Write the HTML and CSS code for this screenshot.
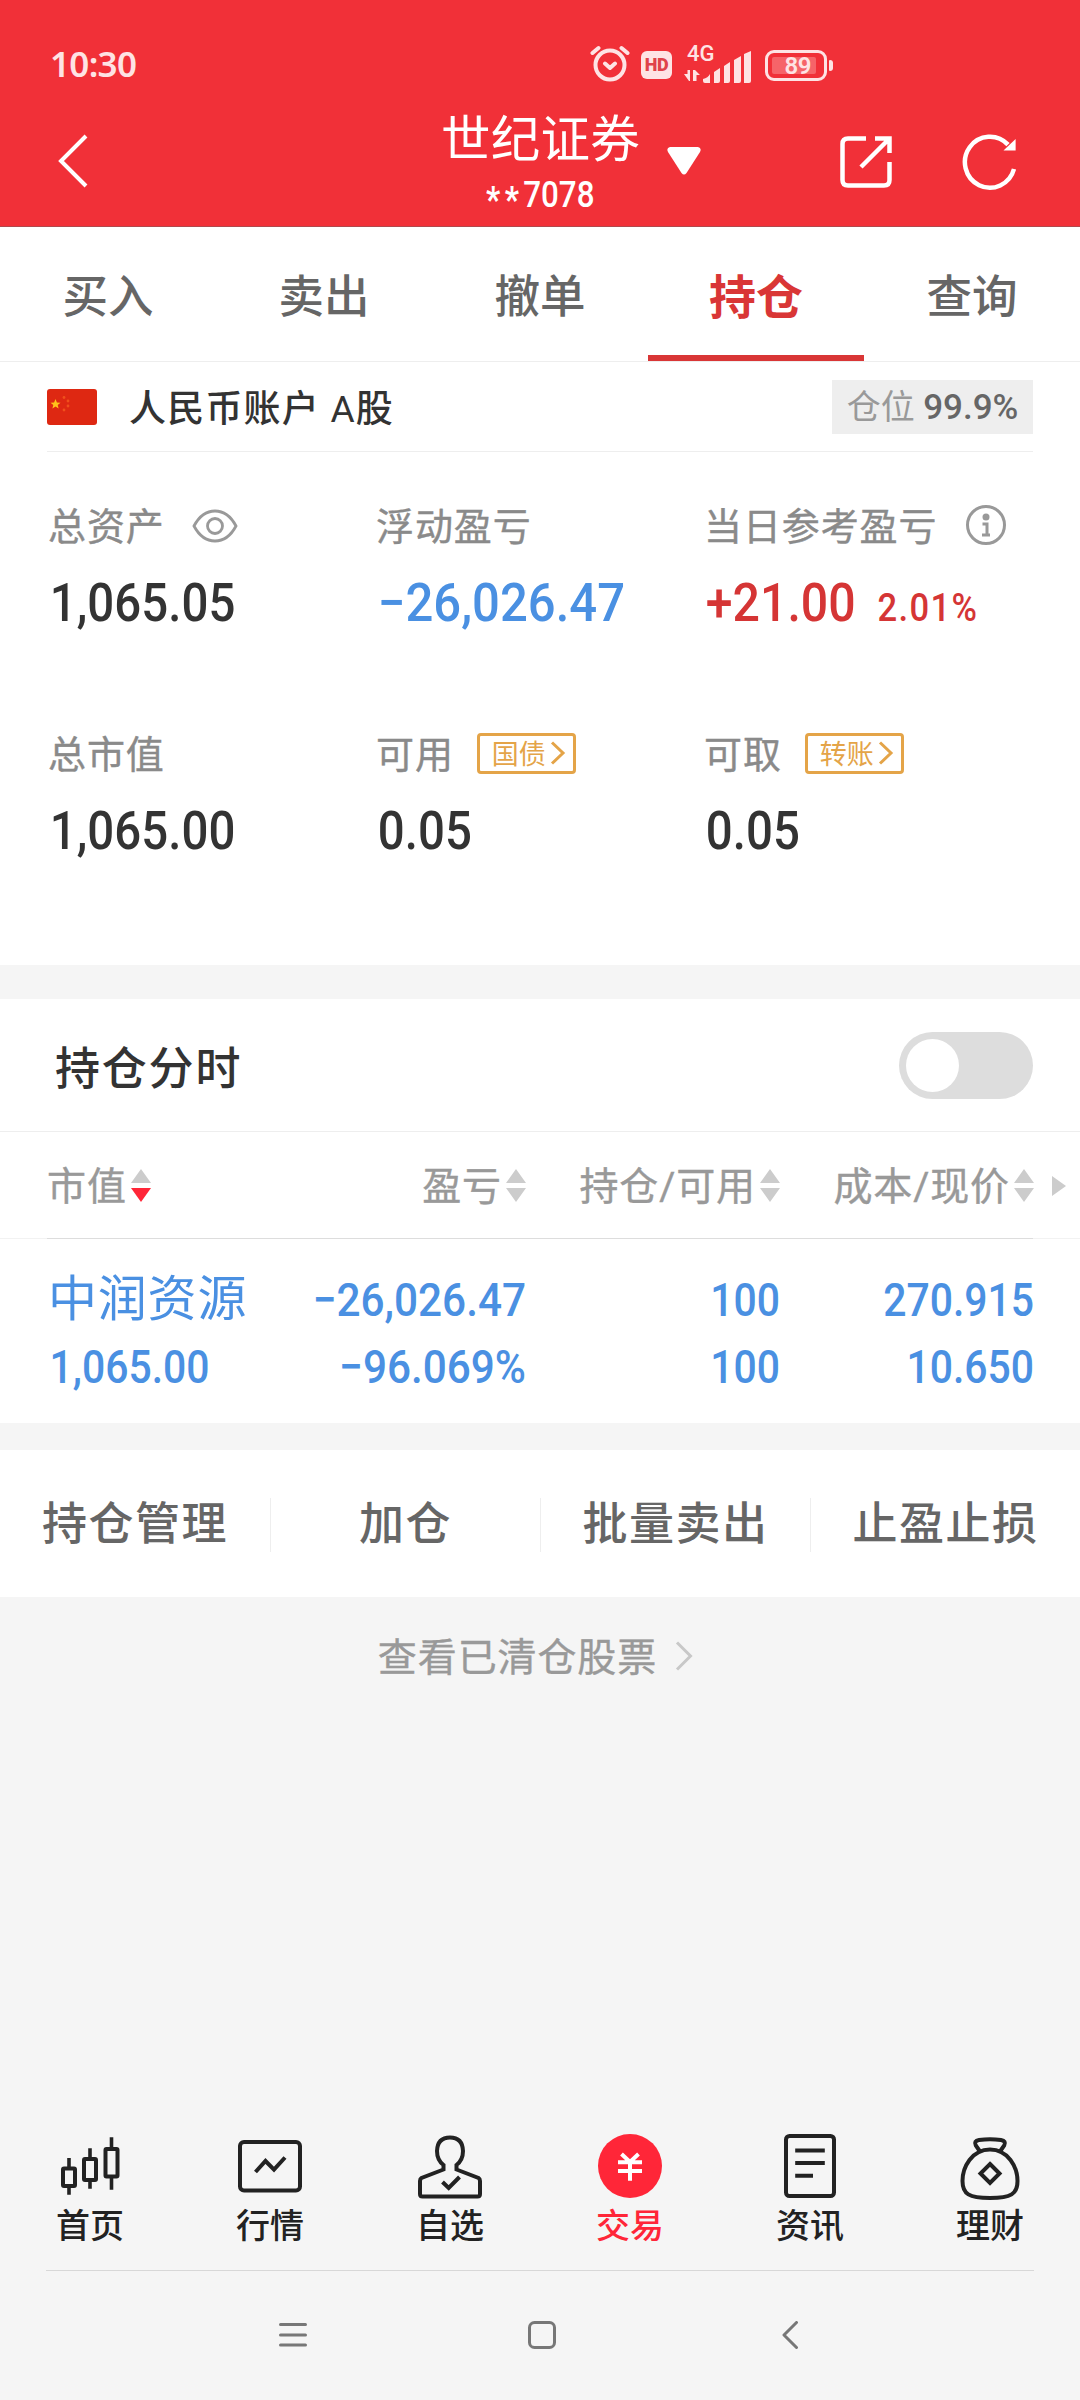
FILE: index.html
```html
<!DOCTYPE html>
<html lang="zh-CN">
<head>
<meta charset="utf-8">
<title>持仓</title>
<link rel="stylesheet" href="styles.css">
</head>
<body>
<div class="app">
  <header class="header">
    <div class="status">
      <span class="time">10:30</span>
      <div class="status-icons">
        <svg class="alarm" width="40" height="40" viewBox="0 0 40 40" fill="none" stroke="#fee3e4" stroke-width="4" stroke-linecap="round" stroke-linejoin="round"><circle cx="20" cy="22" r="14.5"/><path d="M15 20.500l5 4.500 5-4.500M2.500 10L8.500 5M31.500 5l6 5"/></svg>
        <span class="hd">HD</span>
        <div class="signal">
          <span class="net">4G</span>
          <svg width="68" height="40" viewBox="0 0 68 40" fill="#fee3e4"><path d="M0 31h3.500V27h2.500V38H5zM9 27h2l5 5h-3.500v6H9z"/><path d="M19 36q5-1 7-5v9h-5q-2 0-2-2zM30 29l6-4v13q0 2-2 2h-4zM40 23l6-4v19q0 2-2 2h-4zM50 17l7-4v25q0 2-2 2h-5zM60 11l7-3v30q0 2-2 2h-5z"/></svg>
        </div>
        <div class="battery"><span class="level">89</span></div>
        <span class="battery-tip"></span>
      </div>
    </div>
    <div class="titlebar">
      <svg class="back" width="32" height="56" viewBox="0 0 32 56" fill="none" stroke="#fff" stroke-width="4"><path d="M29 3L4 28l25 25"/></svg>
      <div class="title">
        <span class="broker">世纪证券</span>
        <span class="account-no"><i>**</i>7078</span>
      </div>
      <div class="actions">
        <svg class="caret" width="34" height="28" viewBox="0 0 34 28" fill="#fff"><path d="M3 0h28q4 1 2 5L19.500 26q-2.500 3-5 0L1 5Q-1 1 3 0z"/></svg>
        <svg class="share" width="54" height="54" viewBox="0 0 54 54" fill="none" stroke="#fff" stroke-width="4.500"><path d="M27 3.500H9q-5.500 0-5.500 5.500v36q0 5.500 5.500 5.500h36q5.500 0 5.500-5.500V27"/><path d="M36 3.500h14.500V18M50 4L22 32"/></svg>
        <svg class="refresh" width="56" height="58" viewBox="0 0 56 58" fill="none" stroke="#fff" stroke-width="4.500"><path d="M46 11.600A25 25.500 0 1 0 52 36"/><path d="M53.600 6v11.500H41.500z" fill="#fff" stroke="none"/></svg>
      </div>
    </div>
  </header>

  <nav class="tabs">
    <span>买入</span><span>卖出</span><span>撤单</span><span class="active">持仓</span><span>查询</span>
  </nav>

  <section class="account">
    <div class="account-row">
      <svg class="flag" width="50" height="36" viewBox="0 0 50 36"><rect width="50" height="36" rx="3" fill="#de2812"/><path d="M8.500 10l1.400 3.500 3.600.2-2.800 2.300.9 3.600-3.100-2-3.100 2 .9-3.600-2.800-2.300 3.600-.2z" fill="#ffc21a"/><g fill="#f0501c"><circle cx="17" cy="8.500" r="1.400"/><circle cx="21" cy="12" r="1.400"/><circle cx="21" cy="17" r="1.400"/><circle cx="17" cy="21" r="1.400"/></g></svg>
      <span class="account-name">人民币账户 A股</span>
      <span class="position">仓位 <b>99.9%</b></span>
    </div>
    <div class="stats">
      <div class="stat">
        <div class="label">总资产<svg class="eye" width="46" height="34" viewBox="0 0 46 34" fill="none" stroke="#999" stroke-width="2.800"><path d="M2 17Q10 2 23 2t21 15Q36 32 23 32T2 17z"/><circle cx="23" cy="17" r="7.500"/></svg></div>
        <div class="value">1,065.05</div>
      </div>
      <div class="stat">
        <div class="label">浮动盈亏</div>
        <div class="value blue">−26,026.47</div>
      </div>
      <div class="stat">
        <div class="label">当日参考盈亏<svg class="info" width="42" height="42" viewBox="0 0 42 42" fill="none" stroke="#999" stroke-width="3"><circle cx="21" cy="21" r="18.500"/><circle cx="21" cy="13" r="3.500" fill="#999" stroke="none"/><path d="M17.500 20H22v11M17 31h8"/></svg></div>
        <div class="value red">+21.00<small>2.01%</small></div>
      </div>
      <div class="stat">
        <div class="label">总市值</div>
        <div class="value">1,065.00</div>
      </div>
      <div class="stat">
        <div class="label">可用<span class="tag">国债<svg width="16" height="24" viewBox="0 0 16 24" fill="none" stroke="#e4a448" stroke-width="3"><path d="M2 1.500L13 12 2 22.500"/></svg></span></div>
        <div class="value">0.05</div>
      </div>
      <div class="stat">
        <div class="label">可取<span class="tag">转账<svg width="16" height="24" viewBox="0 0 16 24" fill="none" stroke="#e4a448" stroke-width="3"><path d="M2 1.500L13 12 2 22.500"/></svg></span></div>
        <div class="value">0.05</div>
      </div>
    </div>
  </section>

  <section class="holdings">
    <div class="chart-toggle">
      <span>持仓分时</span>
      <span class="switch"><i></i></span>
    </div>
    <div class="table-head">
      <span>市值<svg class="sort" width="20" height="33" viewBox="0 0 20 33" fill="#ccc"><path d="M10 0l10 14H0z"/><path d="M0 19h20L10 33z" fill="#ff2638"/></svg></span>
      <span>盈亏<svg class="sort" width="20" height="33" viewBox="0 0 20 33" fill="#ccc"><path d="M10 0l10 14H0zM0 19h20L10 33z"/></svg></span>
      <span>持仓/可用<svg class="sort" width="20" height="33" viewBox="0 0 20 33" fill="#ccc"><path d="M10 0l10 14H0zM0 19h20L10 33z"/></svg></span>
      <span>成本/现价<svg class="sort" width="20" height="33" viewBox="0 0 20 33" fill="#ccc"><path d="M10 0l10 14H0zM0 19h20L10 33z"/></svg></span>
      <svg class="more" width="14" height="20" viewBox="0 0 14 20" fill="#ccc"><path d="M0 0l14 10L0 20z"/></svg>
    </div>
    <div class="table-row">
      <div><span class="stock">中润资源</span><span>1,065.00</span></div>
      <div class="profit"><span>−26,026.47</span><span>−96.069%</span></div>
      <div><span>100</span><span>100</span></div>
      <div><span>270.915</span><span>10.650</span></div>
    </div>
  </section>

  <section class="tools">
    <span>持仓管理</span><span>加仓</span><span>批量卖出</span><span>止盈止损</span>
  </section>

  <div class="cleared">查看已清仓股票<svg width="18" height="30" viewBox="0 0 18 30" fill="none" stroke="#c8c8c8" stroke-width="3"><path d="M2 1.500L15.500 15 2 28.500"/></svg></div>

  <footer class="footer">
    <nav class="bottom-nav">
      <div class="item"><svg width="72" height="72" viewBox="0 0 72 72"><rect x="9" y="38.500" width="12" height="17.500" rx="1"/><rect x="30" y="29" width="12" height="21" rx="1"/><rect x="51.500" y="19" width="12" height="27.500" rx="1"/><path d="M15 28v10M15 57v7.700M36 18.300V29M36 50v8.700M57.500 7.300V19M57.500 47v12.700" stroke-width="3.600"/></svg><span>首页</span></div>
      <div class="item"><svg width="72" height="72" viewBox="0 0 72 72"><rect x="6" y="12" width="60" height="48.500" rx="4"/><path d="M21.500 42l10-11L40 39.700 51 27.500"/></svg><span>行情</span></div>
      <div class="item"><svg width="72" height="72" viewBox="0 0 72 72"><path d="M29.500 35v4.500L7.500 48Q6 49 6 51v13q0 2.500 2.500 2.500h55Q66 66.500 66 64V51q0-2-1.500-3L42.500 39.500V35Q49 30 49 21 48.500 7.500 36 7.500T23 21q0 9 6.500 14z"/><path d="M28.500 52l6.200 6L45.500 47"/></svg><span>自选</span></div>
      <div class="item active"><svg width="72" height="72" viewBox="0 0 72 72"><circle cx="36" cy="36" r="32" fill="#ff2638" stroke="none"/><path d="M27.500 24l8.500 8 8.500-8M24 32.300h24M24 41h24M36 31v19.700" stroke="#fff"/></svg><span>交易</span></div>
      <div class="item"><svg width="72" height="72" viewBox="0 0 72 72"><rect x="12" y="6" width="48" height="60" rx="3.500"/><path d="M21.200 20.500h29.600M21.200 33h29.600M21.200 45.700H39"/></svg><span>资讯</span></div>
      <div class="item"><svg width="72" height="72" viewBox="0 0 72 72"><path d="M36 19.500C18 19.500 8.500 37 8.500 51 8.500 64 15 68 36 68s27.500-4 27.500-17C63.500 37 54 19.500 36 19.500z"/><path d="M26 21.500L21.800 15.500Q19.500 11 25 10q11-1.500 22 0 5.500 1 3.200 5.500L46 21.500"/><path d="M36 34l9.500 9.500L36 53l-9.500-9.500z"/></svg><span>理财</span></div>
    </nav>
    <div class="system-nav">
      <svg width="28" height="28" viewBox="0 0 28 28"><path d="M1.500 3.500h25M1.500 14h25M1.500 24h25"/></svg>
      <svg width="28" height="28" viewBox="0 0 28 28"><rect x="1.500" y="1.500" width="25" height="25" rx="5"/></svg>
      <svg width="28" height="28" viewBox="0 0 28 28"><path d="M20.500 1.500L8 14l12.500 12.500"/></svg>
    </div>
  </footer>
</div>
</body>
</html>
```
FILE: styles.css
```css
* { box-sizing: border-box; }
body {
  margin: 0;
  background: #f5f5f5;
  color: #333;
  font-family: Roboto, "Noto Sans CJK SC", sans-serif;
}
svg { display: block; flex: none; }
.app {
  width: 1080px;
  height: 2400px;
  display: flex;
  flex-direction: column;
}

/* header */
.header { height: 227px; background: #f13038; color: #fff; border-bottom: 1px solid #b0484c; }
.status {
  height: 92px;
  padding: 38px 0 0 50px;
  display: flex;
  align-items: flex-start;
  color: #fee3e4;
}
.time { width: 540px; font: 600 35px/52px "Noto Sans", sans-serif; letter-spacing: -0.7px; }
.status-icons { display: flex; align-items: center; height: 54px; }
.alarm { margin-top: -4px; }
.hd {
  width: 31px; height: 28px; margin-left: 11px;
  border-radius: 6px; background: #fee3e4; color: #e0434a;
  font-weight: 900; font-size: 18px; line-height: 28px; text-align: center;
  letter-spacing: -0.5px;
}
.signal { position: relative; margin-left: 12px; }
.signal svg { margin-top: -4px; }
.net { position: absolute; left: 3px; top: -6px; font-size: 22px; line-height: 26px; font-weight: 500; letter-spacing: 0; }
.battery {
  width: 62px; height: 31px; margin-left: 13px; padding: 4px;
  border: 3.500px solid #fee3e4; border-radius: 9px;
}
.level {
  display: block; width: 44px; height: 17px; background: #f66469; border-radius: 2px;
  font-size: 24px; font-weight: 600; line-height: 18px; text-align: right; padding-right: 5px; letter-spacing: -0.500px;
}
.battery-tip { width: 4px; height: 11px; margin-left: 2px; border-radius: 1px 3px 3px 1px; background: #fee3e4; }
.titlebar {
  height: 134px;
  display: grid;
  grid-template-columns: 1fr auto 1fr;
}
.back { margin: 41px 0 0 57px; }
.title { display: flex; flex-direction: column; align-items: center; padding-top: 19px; }
.broker { font-size: 49.500px; line-height: 58px; font-weight: 400; margin-right: -1px; letter-spacing: 0.300px; }
.account-no { font-size: 36px; line-height: 42px; font-weight: 500; margin-top: 5px; transform: scaleX(0.87); }
.account-no i { font-style: normal; font-weight: 700; letter-spacing: 5px; vertical-align: -5px; line-height: 0; }
.actions { display: flex; padding-right: 62px; }
.caret { margin: 55px 0 0 28px; }
.share { margin: 43px 0 0 auto; }
.refresh { margin: 41px 0 0 69px; }

/* trade tabs */
.tabs {
  height: 135px;
  display: grid;
  grid-template-columns: repeat(5, 1fr);
  background: #fff;
  border-bottom: 1px solid #eee;
  font-size: 45.500px;
  line-height: 141px;
  text-align: center;
  color: #666;
  font-weight: 500;
}
.tabs span { height: 134px; }
.tabs .active { color: #d93636; border-bottom: 6px solid #d93636; font-size: 47px; font-weight: 600; }

/* account summary */
.account { height: 603px; background: #fff; }
.account-row {
  height: 90px;
  margin: 0 47px;
  border-bottom: 1px solid #eee;
  display: flex;
  align-items: center;
}
.account-name { margin: -2px 0 0 32px; font-size: 37px; letter-spacing: 1.200px; font-weight: 450; }
.position {
  height: 54px; width: 201px; margin-left: auto;
  background: #eee; color: #999;
  font-size: 34px; line-height: 54px; text-align: center; white-space: nowrap;
}
.position b { color: #666; font-weight: 500; font-size: 35px; }
.stats {
  display: grid;
  grid-template-columns: 328px 328px 1fr;
  grid-template-rows: 228px 228px;
  padding: 43px 0 0 48px;
}
.label {
  display: flex; align-items: center; height: 56px;
  font-size: 38px; letter-spacing: 0.900px; color: #8a8a8a;
  -webkit-text-stroke: 0.400px #8a8a8a;
}
.value {
  margin-top: 21px; padding-left: 2px;
  font-size: 53px; line-height: 62px; font-weight: 500; white-space: nowrap;
  transform: scaleX(0.895); transform-origin: left;
}
.value small { font-size: 38px; margin-left: 24px; letter-spacing: 1.500px; }
.eye { margin: 5px 0 0 27px; }
.info { margin: 4px 0 0 28px; }
.tag {
  display: flex; align-items: center; justify-content: space-between;
  width: 99px; height: 41px; margin: 4px 0 0 23px; padding: 0 7px 2px 12px;
  border: 3px solid #e4a448; border-radius: 4px;
  color: #e4a448; font-size: 27px; letter-spacing: 0; -webkit-text-stroke: 0;
}
.tag svg { margin-top: 2px; }
.blue { color: #4a90e2; transform: scaleX(0.925); }
.red { color: #d53535; transform: scaleX(0.91); }

/* holdings */
.holdings { height: 424px; margin-top: 34px; background: #fff; }
.chart-toggle {
  height: 133px; padding: 0 47px 0 55px;
  border-bottom: 1px solid #eee;
  display: flex; align-items: center; justify-content: space-between;
  font-size: 45px; letter-spacing: 1.800px; font-weight: 500;
}
.switch { width: 134px; height: 67px; border-radius: 34px; background: #ddd; padding: 7px; }
.switch i { display: block; width: 53px; height: 53px; border-radius: 50%; background: #fff; }
.table-head, .table-row {
  display: grid;
  grid-template-columns: 200px 279px 254px 254px 1fr;
  padding-left: 47px;
}
.table-head {
  height: 107px; align-items: center;
  font-size: 39px; color: #999;
  background:
    linear-gradient(#ddd, #ddd) 47px 100% / 986px 1px no-repeat,
    linear-gradient(#f2f2f2, #f2f2f2) 0 100% / 100% 1px no-repeat;
}
.table-head span {
  display: flex; align-items: center; justify-content: flex-end;
  padding-top: 2px;
  line-height: 50px; letter-spacing: 0.900px; -webkit-text-stroke: 0.400px #999;
}
.table-head span:first-child { justify-content: flex-start; }
.sort { margin: -2px 0 0 4px; }
.more { margin-left: 18px; }
.table-row { padding-top: 27px; color: #4a90e2; font-size: 47px; font-weight: 500; }
.table-row div { display: flex; flex-direction: column; text-align: right; }
.table-row div:first-child { text-align: left; }
.table-row span { line-height: 67px; white-space: nowrap; transform: scaleX(0.87); transform-origin: right; }
.table-row .profit span { transform: scaleX(0.9); }
.table-row div:first-child span { transform-origin: left; padding-left: 3px; }
.table-row div:first-child .stock { font-size: 49px; padding-left: 1px; font-weight: 400; letter-spacing: 0.800px; transform: none; }

/* actions */
.tools {
  height: 147px; margin-top: 27px; background: #fff;
  display: grid; grid-template-columns: repeat(4, 1fr); align-items: center;
  font-size: 45px; line-height: 54px; letter-spacing: 1.500px; text-align: center; color: #666; font-weight: 500;
  padding-top: 3px;
}
.tools span + span { border-left: 1px solid #eee; }
.cleared {
  height: 114px; display: flex; align-items: center; justify-content: center;
  font-size: 39px; letter-spacing: 0.900px; color: #999; padding-right: 9px;
  -webkit-text-stroke: 0.400px #999;
}
.cleared svg { margin: 4px 0 0 18px; }

/* bottom navigation */
.footer { margin-top: auto; height: 270px; }
.bottom-nav { height: 140px; display: grid; grid-template-columns: repeat(6, 1fr); }
.item { display: flex; flex-direction: column; align-items: center; font-size: 34px; font-weight: 500; line-height: 48px; color: #222; }
.item svg { fill: none; stroke: #222; stroke-width: 4; }
.item.active { color: #ff2638; }
.system-nav {
  margin: 0 46px; border-top: 1px solid #d8d8d8;
  padding: 50px 230px 0 233px; display: flex; justify-content: space-between;
}
.system-nav svg { fill: none; stroke: #777; stroke-width: 3; stroke-linecap: round; stroke-linejoin: round; }
```
